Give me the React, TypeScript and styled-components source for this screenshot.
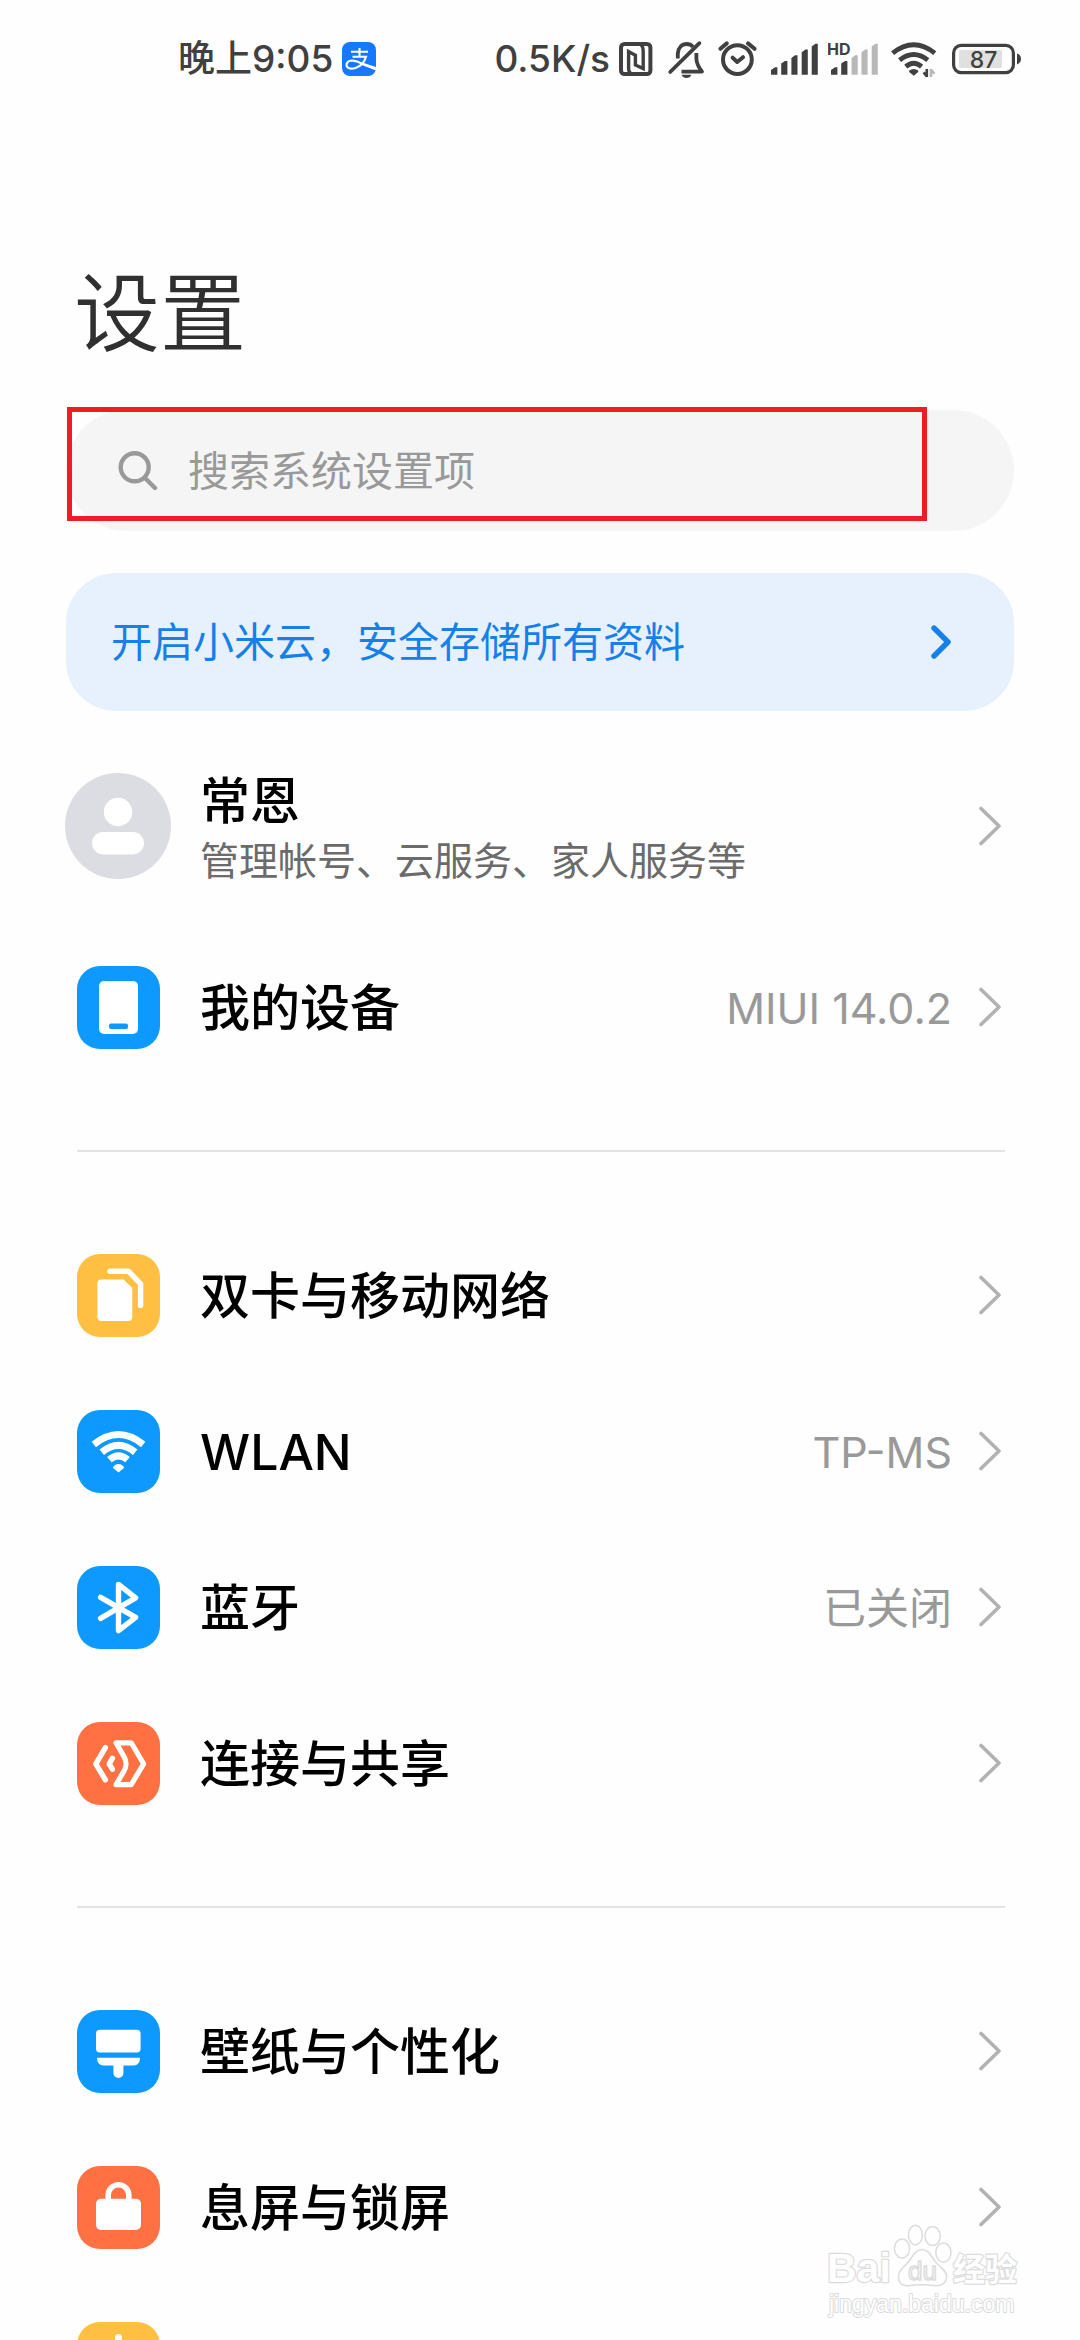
import React from "react";
import styled, { createGlobalStyle } from "styled-components";

const BLUE = "#0d99ff";
const ORANGE = "#ff7043";
const YELLOW = "#ffbf43";
const INK = "#404040";

const GlobalStyle = createGlobalStyle`
  * { box-sizing: border-box; }
  body {
    margin: 0;
    background: #fefefe;
    font-family: Inter, "Noto Sans CJK SC", sans-serif;
  }
`;

const Screen = styled.div`
  position: relative;
  height: 100vh;
  overflow: hidden auto;
  scrollbar-width: none;
  background: #fefefe;
  color: #000;
`;

const StatusBar = styled.header`
  display: flex;
  align-items: center;
  justify-content: space-between;
  height: 118px;
  padding: 0 59px 0 178px;
  color: ${INK};
  font-size: 37px;
  font-weight: 500;
  line-height: 40px;
`;

const StatusGroup = styled.div`
  display: flex;
  align-items: center;
  gap: 9px;

  svg {
    display: block;
    flex: none;
  }
`;

const Title = styled.h1`
  margin: 146px 77px 46px 74px;
  color: #303030;
  font-size: 86px;
  font-weight: 350;
  line-height: 100px;
`;

const SearchArea = styled.div`
  position: relative;
  margin: 0 66px;
`;

const SearchBar = styled.label`
  display: flex;
  align-items: center;
  gap: 30px;
  height: 121px;
  padding: 0 52px;
  border-radius: 61px;
  background: #f5f5f5;

  svg {
    flex: none;
  }
`;

const SearchInput = styled.input`
  flex: 1;
  min-width: 0;
  padding: 0;
  border: 0;
  outline: 0;
  background: transparent;
  color: #000;
  font-family: inherit;
  font-size: 41px;
  line-height: 60px;

  &::placeholder {
    color: #999;
    opacity: 1;
  }
`;

const Highlight = styled.div`
  position: absolute;
  top: -3px;
  left: 1px;
  right: 87px;
  height: 114px;
  border: 5px solid #ee1c24;
  pointer-events: none;
`;

const Banner = styled.a`
  display: flex;
  align-items: center;
  justify-content: space-between;
  height: 138px;
  margin: 42px 66px 37px;
  padding: 0 63px 0 45px;
  border-radius: 50px;
  background: #e6f1fd;
  color: #1680e8;
  font-size: 41px;
  line-height: 60px;
  text-decoration: none;
`;

const List = styled.ul`
  margin: 0;
  padding: 0;
  list-style: none;
`;

const RowLink = styled.a`
  display: flex;
  align-items: center;
  height: 156px;
  padding: 0 79px 0 77px;
  color: inherit;
  text-decoration: none;
`;

const ProfileLink = styled(RowLink)`
  margin-bottom: 25px;
  padding-left: 65px;
`;

const Avatar = styled.span`
  flex: none;
  width: 106px;
  height: 106px;
  margin-right: 29px;
  border-radius: 50%;
  background: #dcdde3;
`;

const Tile = styled.span<{ $color: string }>`
  flex: none;
  width: 83px;
  height: 83px;
  margin-right: 40px;
  border-radius: 23px;
  background: ${(p) => p.$color};
`;

const Texts = styled.span`
  display: flex;
  flex: 1;
  flex-direction: column;
  padding-top: 8px;
`;

const Label = styled.span`
  flex: 1;
  padding-top: 2px;
  font-size: 50px;
  font-weight: 500;
  line-height: 60px;
`;

const Subtitle = styled.span`
  color: #6b6b6b;
  font-size: 39px;
  line-height: 60px;
`;

const Value = styled.span`
  margin-right: 27px;
  padding-top: 2px;
  color: #999;
  font-size: 43px;
  line-height: 60px;
`;

const Divider = styled.hr`
  height: 2px;
  margin: 65px 75px 65px 77px;
  border: 0;
  background: #e3e3e3;
`;

const Watermark = styled.div`
  position: absolute;
  right: 54px;
  bottom: 20px;
  pointer-events: none;

  svg {
    display: block;
  }
`;

const Chevron = () => (
  <svg width="22" height="40" viewBox="0 0 22 40" fill="none" aria-hidden="true">
    <path d="M2 2.5L20 20L2 37.5" stroke="#b2b2b2" strokeWidth="3.6" strokeLinecap="round" strokeLinejoin="round" />
  </svg>
);

const BannerChevron = () => (
  <svg width="20" height="34" viewBox="0 0 20 34" fill="none" aria-hidden="true">
    <path d="M3 3L17 17L3 31" stroke="#1680e8" strokeWidth="5.4" strokeLinecap="round" strokeLinejoin="round" />
  </svg>
);

const SearchIcon = () => (
  <svg width="40" height="40" viewBox="0 0 40 40" fill="none" stroke="#999" strokeWidth="4.4" strokeLinecap="round" aria-hidden="true">
    <circle cx="16.7" cy="16.3" r="14" />
    <path d="M27 27L37 37" />
  </svg>
);

const AlipayIcon = () => (
  <svg width="34" height="34" viewBox="0 0 34 34" fill="none" stroke="#fff" aria-hidden="true">
    <rect width="34" height="34" rx="8" fill="#1677ff" stroke="none" />
    <path d="M9 9.8H26M17.5 6V14.8M10.5 14.8H24C22.5 20 18.5 24.5 13.5 26C7.5 27.8 4 25.5 4.6 22.2C5.4 18.2 10.5 18 15 19.6C19 21 22.5 22.8 25 23.6" strokeWidth="2.1" />
    <path d="M21 20.8L34 25V28.4L20.5 23.2Z" fill="#fff" stroke="none" />
  </svg>
);

const NfcIcon = () => (
  <svg width="39" height="40" viewBox="0 0 39 40" fill="none" stroke={INK} aria-hidden="true">
    <rect x="2" y="5" width="29.4" height="30" rx="3.5" strokeWidth="4" />
    <path d="M13 35Q9.6 34 9.6 29V12.6L16.4 16.2V26L24.2 29.6V12Q24.2 6.4 20.4 5" strokeWidth="3.4" />
  </svg>
);

const BellOffIcon = () => (
  <svg width="41" height="40" viewBox="0 0 41 40" fill="none" stroke={INK} strokeWidth="3.8" strokeLinecap="round" strokeLinejoin="round" aria-hidden="true">
    <path d="M32.4 4.2L3.2 33" />
    <path d="M10.8 19.5V14.5C11.2 8.5 15 5 19.6 5C22 5 24.4 6 26 7.8" strokeLinecap="butt" />
    <path d="M29.4 14V20C29.6 24.5 31 27.5 35 32.6H14.5" strokeLinecap="butt" />
    <path d="M14.6 35.8H24.4Q23 39 19.5 39T14.6 35.8Z" fill={INK} stroke="none" />
  </svg>
);

const AlarmIcon = () => (
  <svg width="45" height="40" viewBox="0 0 45 40" fill="none" stroke={INK} strokeWidth="4" strokeLinecap="round" strokeLinejoin="round" aria-hidden="true">
    <circle cx="20.4" cy="20.6" r="14.4" />
    <path d="M3.4 9.8L9.8 4.4M31 4.4L37.6 9.8M15.6 18.6L20.2 23L26 18.2" />
  </svg>
);

const SignalIcon = () => (
  <svg width="48" height="40" viewBox="0 0 48 40" fill={INK} aria-hidden="true">
    <path d="M0 31L4 28.2H6.4V35.8H0ZM10.2 24.6L14 22H16.4V35.8H10.2ZM20.4 19L24 16.2H26.5V35.8H20.4ZM30.7 13.2L34.4 10.4H36.8V35.8H30.7ZM40.7 7.6L44.4 4.8H46.8V35.8H40.7Z" />
  </svg>
);

const HdSignalIcon = () => (
  <svg width="54" height="40" viewBox="0 0 54 40" aria-hidden="true">
    <path d="M3 31L7 28.2H9.4V35.8H3ZM13.2 24.6L17 22H19.4V35.8H13.2Z" fill={INK} />
    <path d="M23.6 19L27.2 16.2H29.7V35.8H23.6ZM33.5 13.2L37.2 10.4H39.6V35.8H33.5ZM43.7 7.6L47.4 4.8H49.8V35.8H43.7Z" fill="#b8b8b8" />
    <text x="-1" y="16" fontSize="16" fontWeight="700" fill={INK}>HD</text>
  </svg>
);

const StatusWifiIcon = () => (
  <svg width="52" height="40" viewBox="0 0 52 40" fill="none" stroke={INK} strokeWidth="4.8" aria-hidden="true">
    <path d="M1.6 14.2Q22.7 -2.6 43.8 14.2M8.6 21.2Q22.7 9.8 36.8 21.2M14.8 27.6Q22.7 20.8 30.6 27.6" />
    <path d="M18.2 31.6Q22.7 28.4 27.2 31.6V33L22.7 36.8L18.2 33Z" fill={INK} stroke="none" />
    <path d="M35.8 30V38M36 37.6L32.6 33.4" strokeWidth="2.6" />
    <path d="M40 38V30M39.8 30.6L43.4 34.6" stroke="#b8b8b8" strokeWidth="2.6" />
  </svg>
);

const BatteryIcon = () => (
  <svg width="69" height="40" viewBox="0 0 69 40" aria-hidden="true">
    <rect x="1.6" y="6.4" width="59.8" height="27.2" rx="7.5" fill="none" stroke={INK} strokeWidth="3.2" />
    <rect x="7" y="11" width="43" height="18" rx="2" fill="#e0e0e0" />
    <path d="M65 14.6Q69 16 69 20T65 25.4Z" fill={INK} />
    <text x="31.5" y="28.6" fontSize="23" fontWeight="500" textAnchor="middle" fill={INK}>87</text>
  </svg>
);

const AvatarGlyph = () => (
  <svg width="106" height="106" viewBox="0 0 106 106" fill="#fff" aria-hidden="true">
    <circle cx="53" cy="39" r="14.2" />
    <rect x="27" y="59" width="52" height="22.4" rx="11.2" />
  </svg>
);

const Glyph = ({ children }: { children: React.ReactNode }) => (
  <svg width="83" height="83" viewBox="0 0 83 83" fill="none" strokeLinecap="round" strokeLinejoin="round" aria-hidden="true">
    {children}
  </svg>
);

const glyphs = {
  phone: (
    <Glyph>
      <rect x="22" y="15" width="39" height="53" rx="5" fill="#fff" />
      <rect x="32" y="57.6" width="19" height="5.4" rx="2" fill={BLUE} />
    </Glyph>
  ),
  sim: (
    <Glyph>
      <path d="M24.4 25.4H46.6L55.3 34V62.8Q55.3 67 51 67H24.6Q20.4 67 20.4 62.8V29.4Q20.4 25.4 24.4 25.4Z" fill="#fff" />
      <path d="M33 17.2H51.4L63.6 29.8V51.4" stroke="#fff" strokeWidth="5.4" />
    </Glyph>
  ),
  wifi: (
    <Glyph>
      <path d="M16.8 34.4Q41.5 14.6 66.2 34.4M24.8 42.2Q41.5 28.4 58.2 42.2M32.4 49.6Q41.5 42 50.6 49.6" stroke="#fff" strokeWidth="7" strokeLinecap="butt" />
      <path d="M36.4 56.4Q41.5 51.6 46.6 56.4L47 58L41.5 62.4L36 58Z" fill="#fff" />
    </Glyph>
  ),
  bluetooth: (
    <Glyph>
      <path d="M23.6 31.4L58.6 51.4L41.5 64.6V18.4L58.6 31.8L23.6 52.4" stroke="#fff" strokeWidth="5.4" />
    </Glyph>
  ),
  share: (
    <Glyph>
      <path d="M28.4 25.6L18.8 41.8L28.4 57.8" stroke="#fff" strokeWidth="5.4" />
      <path d="M35.4 36.4L32.2 41.8L35.4 47.2" stroke="#fff" strokeWidth="5.4" />
      <path d="M39 20.8H54.2L66.6 41.8L54.2 62.6H39L47 49Q51 41.8 47 34.6Z" stroke="#fff" strokeWidth="5.2" />
    </Glyph>
  ),
  brush: (
    <Glyph>
      <rect x="19" y="19.8" width="44.6" height="22.6" rx="4" fill="#fff" />
      <path d="M20 47.8H63Q63 55.4 56.6 55.4H46.4V63A5 5 0 0 1 36.4 63V55.4H26.4Q20 55.4 20 47.8Z" fill="#fff" />
    </Glyph>
  ),
  lock: (
    <Glyph>
      <rect x="19" y="32.8" width="45" height="31.2" rx="5" fill="#fff" />
      <path d="M31.2 35V29A10.3 10.3 0 0 1 51.8 29V35" stroke="#fff" strokeWidth="5.6" />
    </Glyph>
  ),
  sun: (
    <Glyph>
      <circle cx="41.5" cy="41.5" r="13" fill="#fff" />
      <path d="M41.5 15.6V20M41.5 63V67.4M15.6 41.5H20M63 41.5H67.4M23.2 23.2L26.3 26.3M56.7 56.7L59.8 59.8M23.2 59.8L26.3 56.7M56.7 26.3L59.8 23.2" stroke="#fff" strokeWidth="7" />
    </Glyph>
  ),
};

type Item = {
  icon: keyof typeof glyphs;
  color: string;
  label?: string;
  value?: string;
};

const groups: Item[][] = [
  [{ icon: "phone", color: BLUE, label: "我的设备", value: "MIUI 14.0.2" }],
  [
    { icon: "sim", color: YELLOW, label: "双卡与移动网络" },
    { icon: "wifi", color: BLUE, label: "WLAN", value: "TP-MS" },
    { icon: "bluetooth", color: BLUE, label: "蓝牙", value: "已关闭" },
    { icon: "share", color: ORANGE, label: "连接与共享" },
  ],
  [
    { icon: "brush", color: BLUE, label: "壁纸与个性化" },
    { icon: "lock", color: ORANGE, label: "息屏与锁屏" },
    { icon: "sun", color: YELLOW },
  ],
];

const Row = ({ icon, color, label, value }: Item) => (
  <li>
    <RowLink href="#">
      <Tile $color={color}>{glyphs[icon]}</Tile>
      <Label>{label}</Label>
      {value && <Value>{value}</Value>}
      <Chevron />
    </RowLink>
  </li>
);

const BaiduMark = () => (
  <svg width="200" height="100" viewBox="0 0 200 100" fill="#fefefe" stroke="#dcdcdc" strokeWidth="1.5" strokeLinejoin="round">
    <text x="1" y="62" fontFamily="Liberation Sans, sans-serif" fontSize="41" fontWeight="700" strokeWidth="2.4" paintOrder="stroke">Bai</text>
    <ellipse cx="76" cy="28.5" rx="7.6" ry="9.6" />
    <ellipse cx="89.4" cy="15" rx="7" ry="9.8" />
    <ellipse cx="106.6" cy="16" rx="7.6" ry="9.6" />
    <ellipse cx="117.4" cy="32.6" rx="7.6" ry="9.6" />
    <path d="M96 29.6C89 29.6 86.6 37 82 42.4C77.6 47.4 71.6 51 72.4 58.4C73.2 64.4 78 66.4 84 65.6C92 64.6 101 64.6 108 65.6C115 66.4 120 63.4 120.6 57.4C121 50 113 46.6 109 41.4C105.2 36.4 103 29.6 96 29.6Z" />
    <text x="82" y="60" fontFamily="Liberation Sans, sans-serif" fontSize="26">du</text>
    <text x="127" y="61" fontFamily="Noto Sans CJK SC, sans-serif" fontSize="32" fontWeight="700" strokeWidth="2.4" paintOrder="stroke">经验</text>
    <text x="3" y="92" fontFamily="Liberation Sans, sans-serif" fontSize="23" strokeWidth="2" paintOrder="stroke">jingyan.baidu.com</text>
  </svg>
);

export default function App() {
  return (
    <>
      <GlobalStyle />
      <Screen>
        <StatusBar>
          <StatusGroup>
            <span>晚上9:05</span>
            <AlipayIcon />
          </StatusGroup>
          <StatusGroup>
            <span>0.5K/s</span>
            <NfcIcon />
            <BellOffIcon />
            <AlarmIcon />
            <SignalIcon />
            <HdSignalIcon />
            <StatusWifiIcon />
            <BatteryIcon />
          </StatusGroup>
        </StatusBar>
        <main>
          <Title>设置</Title>
          <SearchArea>
            <SearchBar htmlFor="settings-search">
              <SearchIcon />
              <SearchInput id="settings-search" type="text" placeholder="搜索系统设置项" />
            </SearchBar>
            <Highlight />
          </SearchArea>
          <Banner href="#">
            <span>开启小米云，安全存储所有资料</span>
            <BannerChevron />
          </Banner>
          <ProfileLink href="#">
            <Avatar>
              <AvatarGlyph />
            </Avatar>
            <Texts>
              <Label>常恩</Label>
              <Subtitle>管理帐号、云服务、家人服务等</Subtitle>
            </Texts>
            <Chevron />
          </ProfileLink>
          {groups.map((items, index) => (
            <React.Fragment key={index}>
              {index > 0 && <Divider />}
              <List>
                {items.map((item) => (
                  <Row key={item.icon} {...item} />
                ))}
              </List>
            </React.Fragment>
          ))}
        </main>
        <Watermark>
          <BaiduMark />
        </Watermark>
      </Screen>
    </>
  );
}
